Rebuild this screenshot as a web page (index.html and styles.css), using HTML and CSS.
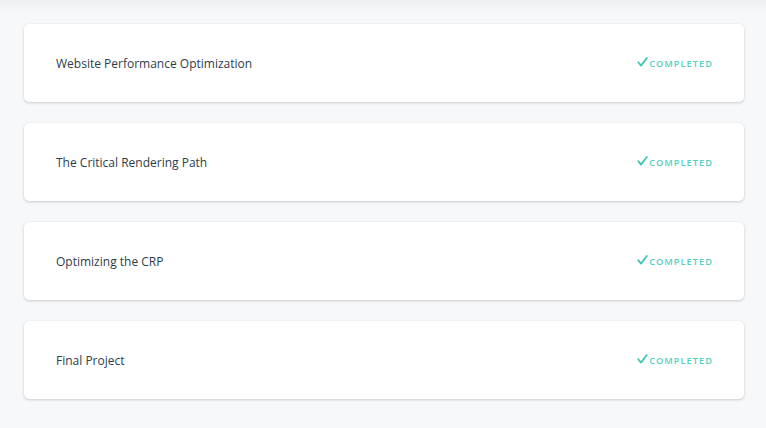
FILE: index.html
```html
<!DOCTYPE html>
<html>
<head>
<meta charset="utf-8">
<link rel="stylesheet" href="styles.css">
</head>
<body>
<main class="list">
  <div class="card"><span class="title">Website Performance Optimization</span><span class="status"><svg class="check" width="11" height="10" viewBox="0 0 11 10"><path d="M1.3 5.2 L4 8.6 L9.8 1" fill="none" stroke="currentColor" stroke-width="1.8" stroke-linecap="round" stroke-linejoin="round"/></svg>Completed</span></div>
  <div class="card"><span class="title">The Critical Rendering Path</span><span class="status"><svg class="check" width="11" height="10" viewBox="0 0 11 10"><path d="M1.3 5.2 L4 8.6 L9.8 1" fill="none" stroke="currentColor" stroke-width="1.8" stroke-linecap="round" stroke-linejoin="round"/></svg>Completed</span></div>
  <div class="card"><span class="title">Optimizing the CRP</span><span class="status"><svg class="check" width="11" height="10" viewBox="0 0 11 10"><path d="M1.3 5.2 L4 8.6 L9.8 1" fill="none" stroke="currentColor" stroke-width="1.8" stroke-linecap="round" stroke-linejoin="round"/></svg>Completed</span></div>
  <div class="card"><span class="title">Final Project</span><span class="status"><svg class="check" width="11" height="10" viewBox="0 0 11 10"><path d="M1.3 5.2 L4 8.6 L9.8 1" fill="none" stroke="currentColor" stroke-width="1.8" stroke-linecap="round" stroke-linejoin="round"/></svg>Completed</span></div>
</main>
</body>
</html>
```
FILE: styles.css
```css
html, body {
  margin: 0;
  padding: 0;
}
body {
  background: linear-gradient(to bottom, #eeeff1 0px, #f4f5f7 8px, #f7f8fa 18px) no-repeat, #f7f8fa;
  font-family: "Open Sans", "Liberation Sans", sans-serif;
  height: 428px;
}
.list {
  padding: 24px 22px 0 24px;
  display: flex;
  flex-direction: column;
  gap: 21px;
}
.card {
  height: 78px;
  box-sizing: border-box;
  background: #fff;
  border-radius: 5px;
  box-shadow: 0 1px 3px rgba(0,0,0,0.18), 0 0 1px rgba(0,0,0,0.08);
  display: flex;
  align-items: center;
  justify-content: space-between;
  padding: 0 32px 0 32px;
}
.title {
  font-size: 12px;
  color: #2e3d49;
}
.status {
  display: flex;
  align-items: center;
  font-size: 9.2px;
  font-weight: 600;
  letter-spacing: 1.05px;
  text-transform: uppercase;
  color: #56cfc3;
  margin-right: -1px;
}
.check {
  color: #3ec6b4;
  margin-right: 1px;
  position: relative;
  top: -1px;
}
```
